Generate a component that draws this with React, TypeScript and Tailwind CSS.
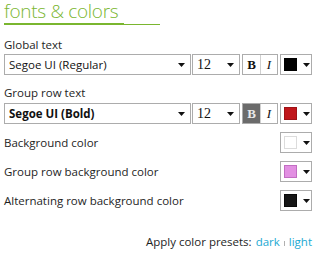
const FONT = "font-['Segoe_UI','Open_Sans',sans-serif]";

const Arrow = () => (
  <svg width="7" height="4" viewBox="0 0 7 4" className="shrink-0">
    <path d="M0 0h7L3.5 4z" fill="#111" />
  </svg>
);

type ColorBoxProps = { fill: string; edge: string };

const ColorBox = ({ fill, edge }: ColorBoxProps) => (
  <div className="flex h-[21px] w-[32px] items-center border border-[#acacac] bg-white pl-[3px]">
    <div className="h-[13px] w-[13px] border" style={{ background: fill, borderColor: edge }} />
    <div className="ml-[6px]">
      <Arrow />
    </div>
  </div>
);

type FontRowProps = { font: string; bold?: boolean; pressed?: boolean; fill: string; edge: string };

const FontRow = ({ font, bold, pressed, fill, edge }: FontRowProps) => (
  <div className="flex h-[21px] items-stretch">
    <div className="flex w-[187px] items-center justify-between border border-[#acacac] pl-[4px] pr-[5px]">
      <span className={`text-[11.5px] leading-none text-[#111] ${bold ? "font-bold" : ""}`}>{font}</span>
      <Arrow />
    </div>
    <div className="ml-[1px] flex w-[48px] items-center justify-between border border-[#acacac] pl-[4px] pr-[5px]">
      <span className="font-['Liberation_Serif',serif] text-[14px] leading-none text-[#111]">12</span>
      <Arrow />
    </div>
    <div className="ml-[2px] flex w-[36px] border border-[#acacac]">
      <div
        className={`flex w-[17px] items-center justify-center font-['Liberation_Serif',serif] text-[13px] font-bold ${
          pressed ? "bg-[#6b6b6b] text-[#e8e8e8]" : "text-[#111]"
        }`}
      >
        B
      </div>
      <div className="flex flex-1 items-center justify-center border-l border-[#d0d0d0] font-['Liberation_Serif',serif] text-[13px] italic text-[#111]">
        I
      </div>
    </div>
    <div className="ml-[2px]">
      <ColorBox fill={fill} edge={edge} />
    </div>
  </div>
);

const ColorRow = ({ label, fill, edge }: { label: string } & ColorBoxProps) => (
  <div className="flex items-center justify-between">
    <span className="text-[11.5px] text-[#1e1e1e]">{label}</span>
    <ColorBox fill={fill} edge={edge} />
  </div>
);

export default function App() {
  return (
    <div className={`h-[254px] w-[317px] bg-white ${FONT}`}>
      <div className="w-[312px] pl-[4px]">
        {/* heading */}
        <h2 className="h-[23px] text-[19px] font-light leading-[23px] tracking-[-0.3px] text-[#7ab62f]">
          fonts &amp; colors
        </h2>
        <div className="flex h-[2px] items-end">
          <div className="h-[2px] w-[120px] bg-[#7ab62f]" />
          <div className="h-[1px] w-[36px] bg-[#7ab62f]" />
        </div>

        <p className="mt-[12px] text-[11.5px] leading-[16px] text-[#1e1e1e]">Global text</p>
        <div className="mt-[1px]">
          <FontRow font="Segoe UI (Regular)" fill="#000" edge="#000" />
        </div>

        <p className="mt-[10px] text-[11.5px] leading-[16px] text-[#1e1e1e]">Group row text</p>
        <div className="mt-[2px]">
          <FontRow font="Segoe UI (Bold)" bold pressed fill="#c0161b" edge="#9e1216" />
        </div>

        <div className="mt-[8px] flex flex-col gap-[8px]">
          <ColorRow label="Background color" fill="#ffffff" edge="#dcdcdc" />
          <ColorRow label="Group row background color" fill="#e290e2" edge="#c26ec2" />
          <ColorRow label="Alternating row background color" fill="#161616" edge="#0a0a0a" />
        </div>

        <div className="mt-[23px] flex items-center justify-end text-[11.5px] leading-[16px] text-[#1e1e1e]">
          <span>Apply color presets:</span>
          <span className="ml-[4px] text-[#1aa9d2]">dark</span>
          <span className="mx-[4px] mt-[2px] h-[5px] w-[1px] bg-[#b0b0b0]" />
          <span className="text-[#1aa9d2]">light</span>
        </div>
      </div>
    </div>
  );
}
